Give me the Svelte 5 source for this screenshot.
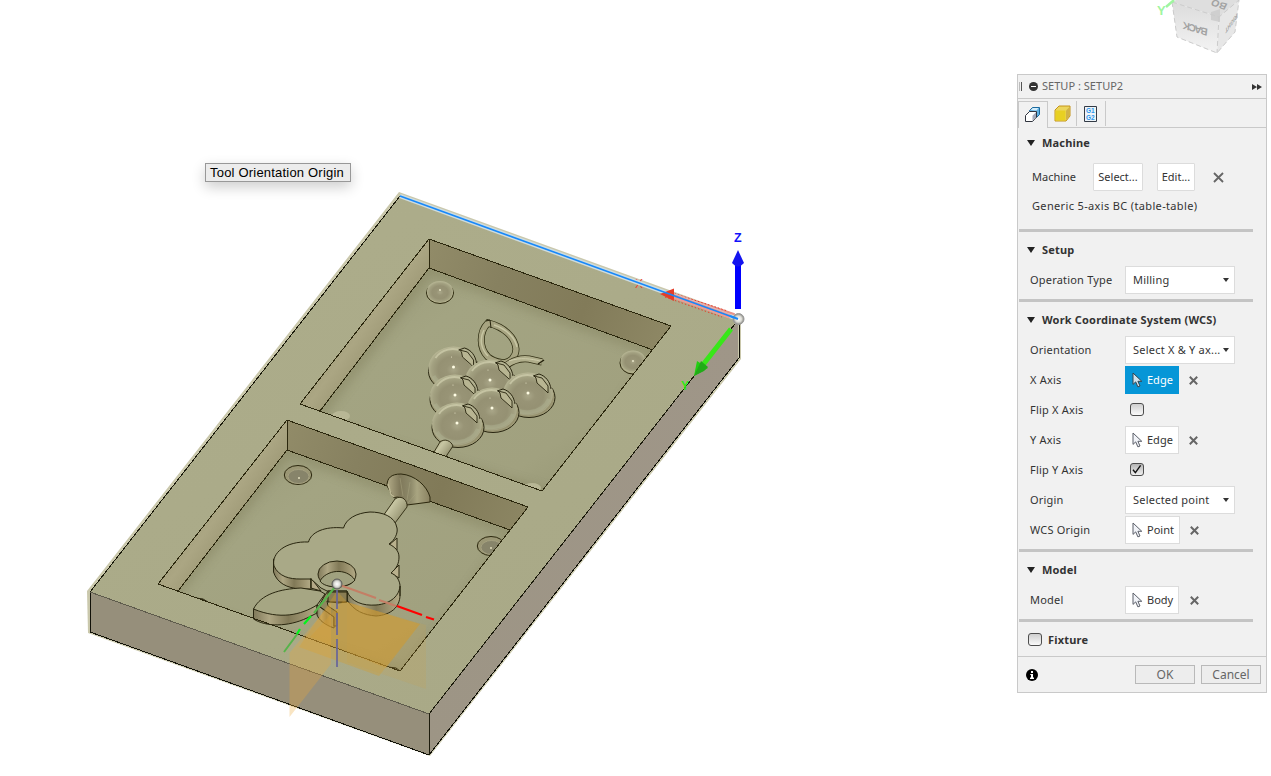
<script>
  const balls = [
    [453.5, 369], [490, 382], [528, 395], [455, 397], [492, 410], [457, 425]
  ];
  const fields = [
    { label: 'Orientation', kind: 'select', value: 'Select X & Y ax...' },
    { label: 'X Axis', kind: 'pick', value: 'Edge', active: true },
    { label: 'Flip X Axis', kind: 'check' },
    { label: 'Y Axis', kind: 'pick', value: 'Edge' },
    { label: 'Flip Y Axis', kind: 'check', on: true },
    { label: 'Origin', kind: 'select', value: 'Selected point' },
    { label: 'WCS Origin', kind: 'pick', value: 'Point' }
  ];
</script>

{#snippet cross(size = 9)}
  <svg class="cross" width={size} height={size} viewBox="0 0 9 9"><path d="M.8.8 8.2 8.2M8.2.8.8 8.2" stroke="#666" stroke-width={size > 9 ? 1.5 : 2} fill="none" /></svg>
{/snippet}

{#snippet pick(value, active)}
  <div class="pick" class:active>
    <svg width="11" height="16" viewBox="0 0 11 16"><path d="M1 1v11.4l2.7-2.5 2.2 5 2.1-.9-2.1-4.7h3.9z" fill={active ? '#cfe3ee' : '#f1f3f8'} stroke={active ? '#34424c' : '#5b5f69'} stroke-width="1" /></svg>
    <span>{value}</span>
  </div>
{/snippet}

{#snippet check(on)}
  <div class="check" class:on>
    {#if on}<svg width="13" height="13" viewBox="0 0 13 13"><path d="M3 6.7 5.4 9.6 10.6 2.4" fill="none" stroke="#111" stroke-width="1.4" /></svg>{/if}
  </div>
{/snippet}

<main>
  <svg class="scene" width="1271" height="776" viewBox="0 0 1271 776">
    <defs>
      <linearGradient id="top" x1="0" y1="0" x2="0.6" y2="1"><stop offset="0" stop-color="#adad8b" /><stop offset="1" stop-color="#a9a987" /></linearGradient>
      <linearGradient id="floor" x1="0" y1="0" x2="1" y2="1"><stop offset="0" stop-color="#979775" /><stop offset=".35" stop-color="#a3a482" /><stop offset=".75" stop-color="#a1a17f" /><stop offset="1" stop-color="#929270" /></linearGradient>
      <linearGradient id="wall" gradientUnits="userSpaceOnUse" x1="429" y1="250" x2="668" y2="340"><stop offset="0" stop-color="#918b68" /><stop offset=".3" stop-color="#878160" /><stop offset=".65" stop-color="#827b59" /><stop offset="1" stop-color="#8e8865" /></linearGradient>
      <linearGradient id="wall2" gradientUnits="userSpaceOnUse" x1="287" y1="430" x2="525" y2="520"><stop offset="0" stop-color="#918b68" /><stop offset=".3" stop-color="#878160" /><stop offset=".65" stop-color="#817a58" /><stop offset="1" stop-color="#8c8663" /></linearGradient>
      <linearGradient id="side" x1="0" y1="0" x2="1" y2="1"><stop offset="0" stop-color="#8d8765" /><stop offset=".3" stop-color="#989371" /><stop offset=".5" stop-color="#aba683" /><stop offset=".75" stop-color="#8e8966" /></linearGradient>
      <linearGradient id="right" x1="1" y1="0" x2="0" y2="1"><stop offset="0" stop-color="#9f9688" /><stop offset="1" stop-color="#9d9585" /></linearGradient>
      <radialGradient id="ball" cx=".5" cy=".54" r=".56"><stop offset="0" stop-color="#a9a688" /><stop offset=".25" stop-color="#989476" /><stop offset=".55" stop-color="#959173" /><stop offset=".78" stop-color="#a3a181" /><stop offset="1" stop-color="#bebd9b" /></radialGradient>
      <radialGradient id="base"><stop offset=".7" stop-color="#898865" /><stop offset=".9" stop-color="#96916e" /><stop offset="1" stop-color="#a39f7b" /></radialGradient>
      <radialGradient id="knob"><stop offset="0" stop-color="#fff" /><stop offset=".55" stop-color="#deded8" /><stop offset="1" stop-color="#868680" /></radialGradient>
      <linearGradient id="rim"><stop offset="0" stop-color="#80795a" /><stop offset=".25" stop-color="#aea683" /><stop offset=".55" stop-color="#817957" /><stop offset=".8" stop-color="#9d9470" /><stop offset="1" stop-color="#b3ab87" /></linearGradient>
      <linearGradient id="cone"><stop offset="0" stop-color="#b3ac88" /><stop offset=".3" stop-color="#7f785a" /><stop offset=".55" stop-color="#8e8a6a" /><stop offset=".7" stop-color="#a9a581" /><stop offset="1" stop-color="#8a8261" /></linearGradient>
      <linearGradient id="rod" x1="0" y1="0" x2="1" y2=".7"><stop offset="0" stop-color="#a09c79" /><stop offset=".4" stop-color="#c7c6a3" /><stop offset=".7" stop-color="#a9a785" /><stop offset="1" stop-color="#868463" /></linearGradient>
      <linearGradient id="cubeFace" x1="0" y1="0" x2="0" y2="1"><stop offset="0" stop-color="#dcdcdc" /><stop offset="1" stop-color="#f3f3f3" /></linearGradient>
      <clipPath id="upper"><path d="M429 239 671 326 542 491 300 404z" /></clipPath>
      <clipPath id="lower"><path d="M287 420 528 507 400 671 158 584z" /></clipPath>
      <filter id="soft" x="-30%" y="-30%" width="160%" height="160%"><feGaussianBlur stdDeviation="5" /></filter>
    </defs>

    <!-- plate -->
    <path d="M399 192 741 316 741 359 430 756 88 633 87 591z" fill="#cac8ac" />
    <path d="M400 196 738 319 429 714 90 592z" fill="url(#top)" />
    <path d="M90 592 429 714V755L90 632z" fill="#968f7b" />
    <path d="M738 320V359L429 755V714z" fill="url(#right)" />
    <g fill="none" stroke="#1c1b0c" shape-rendering="crispEdges">
      <path d="M400 196 90 592" />
      <path d="M90 592V632L429 755 739 358V321" stroke="#111108" />
      <path d="M429 714V755" />
      <path d="M738 320 429 714" />
      <path d="M90 592 429 714" stroke="#5e5b4c" />
    </g>

    <!-- upper pocket -->
    <g clip-path="url(#upper)">
      <path d="M429 239 671 326 542 491 300 404z" fill="url(#floor)" />
      <path d="M429 268 660 352 560 500 310 425z" fill="none" stroke="#817f5c" stroke-width="14" opacity=".4" filter="url(#soft)" />
      <path d="M429 239 690 333V363L429 268z" fill="url(#wall)" />
      <path d="M429 239V268L315 416 300 404z" fill="url(#side)" />
      <g fill="none" stroke="#2b270d" shape-rendering="crispEdges"><path d="M429 239V268L653 350M429 268 320 411" /></g>
      <g stroke="#2b270d" stroke-width="1">
        <ellipse cx="440" cy="293" rx="13.5" ry="10.5" fill="#b1af8b" />
        <ellipse cx="633" cy="363" rx="13" ry="11" fill="#b1af8b" />
      </g>
      <ellipse cx="440" cy="291.500" rx="13" ry="10.500" fill="url(#ball)" />
      <ellipse cx="633" cy="361" rx="12.500" ry="10.500" fill="url(#ball)" />
      <circle cx="440" cy="290" r=".9" fill="#f0edcf" /><circle cx="633" cy="361" r=".9" fill="#f0edcf" />
      <ellipse cx="341" cy="416" rx="9" ry="5" fill="#b8b795" />
      <ellipse cx="532" cy="488" rx="9" ry="5" fill="#b8b795" />

      <!-- leaf and tendril -->
      <path d="M488 323c-9 9-9 25 0 34 6 5 11 5 16 6 6-1 12-6 12-14-1-12-12-22-28-26z" fill="none" stroke="#313014" stroke-width="7" />
      <path d="M488 323c-9 9-9 25 0 34 6 5 11 5 16 6 6-1 12-6 12-14-1-12-12-22-28-26z" fill="none" stroke="#a7a481" stroke-width="5.500" />
      <path d="M484 330c-5 9-3 19 4 26M494 325c13 4 21 13 23 22" fill="none" stroke="#c7c6a3" stroke-width="1.500" />
      <path d="M486 321 490 320 491 328" fill="none" stroke="#26230d" />
      <path d="M506 366c7-6 15-8 23-7l13 3" fill="none" stroke="#343116" stroke-width="7" />
      <path d="M505 366c8-6 16-8 24-7l13 3" fill="none" stroke="#b0ae8b" stroke-width="5.500" />
      <path d="M509 361c11-4 23-2 31 0" fill="none" stroke="#ceccab" />
      <path d="M538 364 544 360" stroke="#26230d" stroke-width="1.500" />

      <!-- cluster -->
      {#each balls as [x, y]}
        <g transform="translate({x} {y})">
          <ellipse cx="1" cy="2.500" rx="26" ry="20" fill="url(#base)" stroke="#282510" />
          <ellipse cx="0" cy="-1" rx="25" ry="21.500" fill="url(#ball)" />
          <path d="M-20 7C-16 15-7 18 2 17S18 11 21 4" fill="none" stroke="#b5bb9b" stroke-width="4" opacity=".35" />
          <path d="M-18-11C-12-20 0-22 8-18" fill="none" stroke="#d0cfae" stroke-width="2" opacity=".7" />
          <path d="M6-19 14-17 20-9V-2L18-4 9-12 8-17z" fill="#b8b592" stroke="#292610" stroke-width=".9" />
          <path d="M5-19 11-21C18-19 22-13 23-6" fill="none" stroke="#292610" />
          <circle cx="0" cy="-2" r="1.500" fill="#fffde4" /><circle cx="-2" cy="-12" r=".6" fill="#e6e3c5" />
        </g>
      {/each}
      <path d="M434 452 440 442C445 438 451 441 453 446L445 458z" fill="url(#rod)" stroke="#2b270d" stroke-width=".9" />
    </g>
    <path d="M429 239 671 326 542 491 300 404z" fill="none" stroke="#2b270d" shape-rendering="crispEdges" />

    <!-- lower pocket -->
    <g clip-path="url(#lower)">
      <path d="M287 420 528 507 400 671 158 584z" fill="url(#floor)" />
      <path d="M287 450 515 532 410 680 165 604z" fill="none" stroke="#817f5c" stroke-width="14" opacity=".4" filter="url(#soft)" />
      <path d="M287 420 548 514V544L287 450z" fill="url(#wall2)" />
      <path d="M287 420V450L174 597 158 584z" fill="url(#side)" />
      <path d="M287 420V450L510 530M287 450 178 591" fill="none" stroke="#2b270d" shape-rendering="crispEdges" />
      <ellipse cx="298" cy="475" rx="13.7" ry="9.5" fill="#9b9775" stroke="#2b270d" />
      <ellipse cx="298.500" cy="476.500" rx="10.500" ry="7" fill="#87846a" stroke="#a9a584" stroke-width=".8" />
      <circle cx="299" cy="478" r="1" fill="#e0ddbd" />
      <ellipse cx="491" cy="546" rx="13.7" ry="9.5" fill="#9b9775" stroke="#2b270d" />
      <ellipse cx="491.500" cy="547.500" rx="10.500" ry="7" fill="#87846a" stroke="#a9a584" stroke-width=".8" />
      <circle cx="491" cy="548" r="1" fill="#e0ddbd" />
      <path d="M196 598 203 599 208 602M388 667 396 668 400 671" fill="none" stroke="#26230d" stroke-width="1" />

      <!-- funnel -->
      <path d="M387 486C387 478 391 474 401 474 415 475 427 486 430 497V502L407 505C405 500 399 495 394 498z" fill="url(#cone)" stroke="#2b270d" />
      <path d="M388 484 391 494 394 497" fill="none" stroke="#bcb793" stroke-width="1.500" />
      <path d="M400 478 403 496M410 482 407 500M420 489 408 503" stroke="#aaa683" stroke-width=".7" opacity=".7" />
      <path d="M383 516 395 499C402 494 408 501 407 507L395 523z" fill="url(#rod)" stroke="#2b270d" stroke-width=".9" />
    </g>

    <!-- raised flower -->
    <g stroke="#29260f" stroke-width="1">
      <path d="M273.500 559V572C277 583 287 588 300 589H311V579L290 574z" fill="url(#rim)" />
      <path d="M311 578 321 591 311 588z" fill="#b5aa88" />
      <path d="M347 593V600C354 611 364 615 376 616 391 615 400 607 400 595V586z" fill="url(#rim)" />
      <path d="M389 545 397 538V550zM391 573 399 565V578z" fill="#b9b18d" />
      <path d="M308.500 542C286 541 271 553 274 566 279 577 290 579 300 579H311L321 588 327 591H347C351 602 363 606 376 605 391 604 400 595 400 585 399 579 396 575 391 573 397 568 399 563 399 557 399 551 395 547 389 544 395 540 398 533 397 528 395 516 382 512 370 512 356 513 346 519 343.500 528 325 526 311 532 308.500 542z" fill="#a9a987" />
      <path d="M318 574A19 13 0 0 1 356 574C356 583 347 587 337 587S318 582 318 574z" fill="url(#rim)" />
      <path d="M320 581C326 570 346 567 355 580 348 589 325 589 320 581z" fill="#a0a17f" />
    </g>
    <path d="M273.500 560V568M311 578V588M400 586V596" stroke="#29260f" />

    <!-- raised leaf and stem -->
    <g stroke="#29260f" stroke-width="1">
      <path d="M253.500 609V619C266 627 288 627 307 618L317 613V605z" fill="url(#rim)" />
      <path d="M253.500 609C261 594 280 589 301 588L320 591 325 594 317 605C301 615 280 620 253.500 609z" fill="#a6a683" />
      <path d="M317 605 334 617V628C325 625 319 620 317 615z" fill="url(#rim)" />
      <path d="M325 595 328 591H347V602L338 603 327 601 328 606 337 612V626L334 626V617L319 606z" fill="#8f875f" />
      <path d="M328 592H347V602H328z" fill="#897d53" />
    </g>
    <path d="M158 584 400 671 528 507 287 420z" fill="none" stroke="#2b270d" shape-rendering="crispEdges" />

    <!-- origin planes and axes -->
    <path d="M337 591 347 602 420 624 379 676 299 647z" fill="#d69e2b" opacity=".36" />
    <path d="M343 601 420 624 386 668 310 637z" fill="#cc982e" opacity=".36" />
    <path d="M347 602 426 625V689L347 662z" fill="#cda342" opacity=".17" />
    <path d="M331 603V664L289.500 717V653z" fill="#eaa838" opacity=".3" />
    <g fill="none" stroke-width="2">
      <path d="M337 584 376 598M379 600 396 606" stroke="#c47e65" />
      <path d="M397 606 422 615M426 617 434 619.500" stroke="#f00" stroke-width="2.200" />
      <path d="M335 587 314 613M298 633 284 652" stroke="#56b34a" />
      <path d="M311 616 304 624M300 629 297 634" stroke="#00f51a" stroke-width="2.200" />
      <path d="M337 590V609M337 613V635M337 639V667" stroke="#66649a" opacity=".85" />
    </g>
    <circle cx="337" cy="584" r="5" fill="url(#knob)" stroke="#5d5d59" />

    <!-- selected edge and coordinate triad -->
    <path d="M668 294 734 316" stroke="#e8938a" stroke-width="6" />
    <path d="M668 291.500 726 310.500M665 297 722 317" stroke="#e83a28" stroke-dasharray="1.500 2" />
    <text x="635" y="288" font-family="Liberation Sans" font-size="12" fill="#e84733">X</text>
    <path d="M400 196 738 319" stroke="#cddce0" stroke-width="4.500" />
    <path d="M668 294 730 316.500" stroke="#ee9b93" stroke-width="4.500" />
    <path d="M660 294 674 288.500V301z" fill="#e43e2a" />
    <path d="M400 196 738 319" stroke="#1688fa" stroke-width="1.600" />
    <path d="M731 329 702 366" stroke="#38e719" stroke-width="5" />
    <path d="M694 376 697 361 708 368z" fill="#23cf12" />
    <path d="M694 376 701 361 708 367 704 371z" fill="#21ab18" />
    <text x="681" y="390" font-family="Liberation Sans" font-size="12" font-weight="700" fill="#31e817">Y</text>
    <path d="M738 262V309" stroke="#00f" stroke-width="6" />
    <path d="M738 250 744 263Q738 270 732 263z" fill="#1414ef" />
    <text x="734" y="242" font-family="Liberation Sans" font-size="12.500" font-weight="700" fill="#1111fb">Z</text>
    <circle cx="738.500" cy="319" r="5.500" fill="url(#knob)" stroke="#999" />
    <path d="M730 316 738 319" stroke="#1688fa" stroke-width="2" />

    <!-- view cube -->
    <path d="M1172 2 1219 17 1217 53 1177 37z" fill="url(#cubeFace)" />
    <path d="M1219 17 1239 0 1235 32 1217 53z" fill="#e7e7e7" />
    <path d="M1172 2 1176 0H1239L1219 17z" fill="#dedede" />
    <path d="M1211 12 1220 9 1220 22 1211 20z" fill="#cfcfcf" />
    <path d="M1172 2 1219 17 1239 0M1219 17 1217 53M1172 2 1177 37 1217 53 1235 32 1239 0" fill="none" stroke="#cbcbcb" stroke-dasharray="5 3" />
    <g font-family="Liberation Sans" font-weight="700" fill="#a2a2a2">
      <text transform="matrix(-1 -.3 .12 -1 1208 29)" font-size="10" textLength="25">BACK</text>
      <text transform="matrix(-.9 -.3 .4 -.8 1228 4)" font-size="11">BO</text>
      <text transform="matrix(-.55 .75 -.1 -.9 1237 13)" font-size="7">RIGHT</text>
    </g>
    <path d="M1166 7 1174 0" stroke="#a0f5a0" stroke-width="2.500" />
    <text x="1157" y="15" font-family="Liberation Sans" font-size="13" font-weight="700" fill="#a0f5a0">Y</text>
  </svg>

  <div class="tip">Tool Orientation Origin</div>

  <section class="panel">
    <header>
      <i class="grip"></i>
      <i class="minus"></i>
      <span>SETUP : SETUP2</span>
      <svg width="10" height="6" viewBox="0 0 10 6"><path d="M0 0 5 3 0 6zM5 0 10 3 5 6z" fill="#333" /></svg>
    </header>
    <nav>
      <div class="tab on"><svg width="17" height="17" viewBox="0 0 17 17"><path d="M5.500 4.500 8.500 1.500H15.500V8.500L12.500 11.500H5.500z" fill="#5fb0e2" stroke="#1c6a9e" /><path d="M6.500 4 9 2H14.500L12.500 4.500z" fill="#d3edfb" /><path d="M1.500 9.500 5.500 5.500H12.500V11L8.500 15.500H1.500z" fill="#fff" stroke="#30343e" /><path d="M8.500 9.800 12 6.300V10.800L8.500 14.800z" fill="#a3a9bb" /></svg></div>
      <div class="tab"><svg width="17" height="17" viewBox="0 0 17 17"><path d="M1 5 5 1H16V11L12 16H1z" fill="#ecd65e" stroke="#c4941b" /><path d="M1.500 5.500H11.500V15.500H1.500z" fill="#e8d022" /><path d="M12 5.500 15.500 2V11L12 15z" fill="#d0b248" /></svg></div>
      <div class="tab doc"><svg width="13" height="16" viewBox="0 0 13 16"><path d="M.5.5H12.500V15.500H.5z" fill="#eef4f8" stroke="#333b46" /><g font-family="Liberation Sans" font-size="6.500" font-weight="700" fill="#2994ed"><text x="2" y="7">G1</text><text x="2" y="13.500">G2</text></g></svg></div>
    </nav>

    <div class="body">
      <h3 class="first">Machine</h3>
      <div class="machine">
        <span>Machine</span><button class="sel">Select...</button><button class="edit">Edit...</button>{@render cross(11)}
      </div>
      <p>Generic 5-axis BC (table-table)</p>
      <hr class="tight" />
      <h3>Setup</h3>
      <div class="row"><span class="lab">Operation Type</span><div class="select">Milling</div></div>
      <hr />
      <h3>Work Coordinate System (WCS)</h3>
      {#each fields as f}
        <div class="row">
          <span class="lab">{f.label}</span>
          {#if f.kind === 'select'}<div class="select">{f.value}</div>
          {:else if f.kind === 'pick'}{@render pick(f.value, f.active)}{@render cross()}
          {:else}{@render check(f.on)}{/if}
        </div>
      {/each}
      <hr />
      <h3>Model</h3>
      <div class="row"><span class="lab">Model</span>{@render pick('Body', false)}{@render cross()}</div>
      <hr />
      <div class="fixture">{@render check(false)}<b>Fixture</b></div>
    </div>
    <footer>
      <svg width="12" height="12" viewBox="0 0 12 12"><circle cx="6" cy="6" r="6" fill="#000" /><path d="M5 2h2v2H5zM4.300 5H7v3.500h1V10H4V8.500h1V6h-.7z" fill="#fff" /></svg>
      <button>OK</button><button>Cancel</button>
    </footer>
  </section>
</main>

<style>
  :global(body) { margin: 0; background: #fff; overflow: hidden; }
  main { position: relative; width: 1271px; height: 776px; background: #fff; overflow: hidden; }
  .scene { display: block; }
  * { box-sizing: border-box; }
  .tip { position: absolute; left: 205px; top: 163px; width: 146px; height: 19px; padding-left: 4px; border: 1px solid #989898; background: #ececec; color: #000; font: 13px/18px "Liberation Sans", sans-serif; letter-spacing: .2px; white-space: nowrap; box-shadow: 0 5px 14px #0003; }
  .panel { position: absolute; left: 1017px; top: 74px; width: 250px; height: 619px; border: 1px solid #c9c9c9; background: #f1f1f1; color: #333; font: 11px/14px "Noto Sans", sans-serif; display: flex; flex-direction: column; }
  header { height: 24px; flex: none; border-bottom: 1px solid #c9c9c9; display: flex; align-items: center; color: #666; }
  header span { flex: 1; margin-left: 4px; padding-bottom: 2px; letter-spacing: .02px; }
  header svg { margin-right: 4px; }
  .grip { width: 3px; height: 9px; margin-left: 1px; border-left: 1px solid #bbb; border-right: 1px solid #555; }
  .minus { width: 9px; height: 9px; margin-left: 7px; border-radius: 50%; background: linear-gradient(#fff, #fff) center / 5px 1px no-repeat #333; }
  nav { height: 29px; flex: none; border-bottom: 1px solid #c9c9c9; display: flex; padding-top: 2px; }
  .tab { width: 29px; height: 25px; border-right: 1px solid #c9c9c9; display: flex; align-items: center; justify-content: center; }
  .tab.on { width: 30px; height: 27px; background: #f1f1f1; border-left: 1px solid #c9c9c9; border-top: 1px solid #c9c9c9; padding: 0 1px 2px 0; }
  .tab.doc { padding-right: 2px; }
  .body { flex: 1; min-height: 0; }
  h3 { margin: 0; height: 33px; padding-left: 24px; font-size: 11px; line-height: 35px; font-weight: 700; letter-spacing: .18px; position: relative; }
  h3::before { content: ''; position: absolute; left: 9px; top: 15px; border: 4.500px solid transparent; border-top: 6px solid #222; border-bottom: 0; }
  h3.first { height: 31px; line-height: 30px; }
  h3.first::before { top: 12px; }
  .machine { height: 36px; display: flex; align-items: center; padding-left: 14px; }
  .machine span { width: 61px; }
  button { font: inherit; color: #333; padding: 0; margin: 0; white-space: nowrap; }
  .machine button { height: 28px; background: #fff; border: 1px solid #dcdcdc; border-radius: 1px; }
  .machine .sel { width: 50px; }
  .machine .edit { width: 38px; margin-left: 14px; }
  .machine :global(.cross) { margin-left: 18px; }
  p { margin: 0; height: 34px; padding: 4px 0 0 14px; letter-spacing: .35px; }
  hr { margin: 4px 0 0 1px; border: 0; width: 234px; height: 3px; background: #c4c4c4; }
  hr.tight { margin-top: 0; }
  .row { height: 30px; display: flex; align-items: center; padding-left: 12px; }
  .lab { width: 95px; flex: none; letter-spacing: .2px; }
  .select { position: relative; width: 110px; height: 28px; padding-left: 7px; line-height: 25px; border: 1px solid #dcdcdc; background: #fff; white-space: nowrap; letter-spacing: .22px; }
  .select::after { content: ''; position: absolute; right: 5px; top: 11px; border: 3px solid transparent; border-top: 4px solid #333; border-bottom: 0; }
  .pick { height: 28px; display: flex; align-items: center; padding: 0 5px 0 6px; border: 1px solid #dcdcdc; background: #fff; }
  .pick span { margin-left: 4px; }
  .pick.active { background: #0696d7; border-color: #0696d7; color: #fff; }
  .pick + :global(svg) { margin-left: 10.500px; }
  .check { width: 14px; height: 13px; border: 1px solid #4d4d4d; border-radius: 3px; background: linear-gradient(#cfcfcf, #fafafa); margin: -1px 0 0 5px; display: flex; }
  .check.on { background: linear-gradient(#b5b5b5, #efefef); }
  .check svg { margin: -1px; flex: none; }
  .fixture { height: 34px; display: flex; align-items: center; padding: 2px 0 0 5px; }
  .fixture b { margin-left: 6px; letter-spacing: .2px; }
  footer { height: 36px; flex: none; border-top: 1px solid #c9c9c9; display: flex; align-items: center; padding: 0 5px 0 8px; }
  footer svg { margin-right: auto; }
  footer button { width: 60px; height: 19px; margin-left: 6px; border: 1px solid #b9b9b9; background: #ededed; color: #666; font-size: 12px; line-height: 17px; }
</style>
